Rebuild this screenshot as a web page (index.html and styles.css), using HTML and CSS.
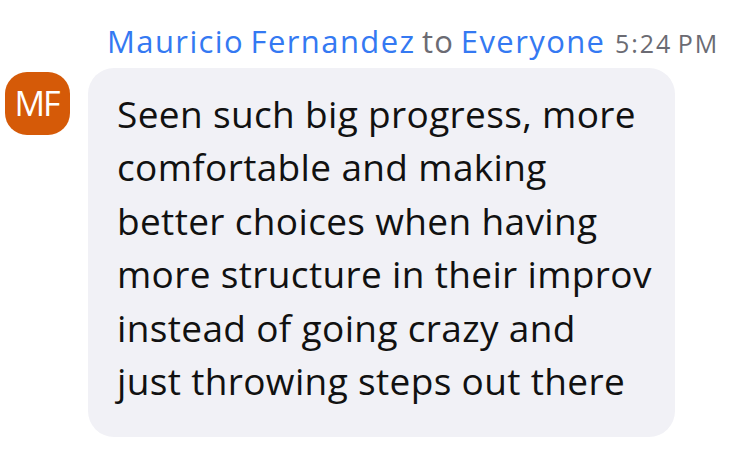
FILE: index.html
```html
<!DOCTYPE html>
<html>
<head>
<meta charset="utf-8">
<link rel="stylesheet" href="styles.css">
</head>
<body>
<div class="msg">
  <div class="meta">
    <span class="name">Mauricio Fernandez</span>
    <span class="to">to</span>
    <span class="name">Everyone</span>
    <span class="time">5:24 PM</span>
  </div>
  <div class="row">
    <div class="avatar">MF</div>
    <div class="bubble">Seen such big progress, more<br>comfortable and making<br>better choices when having<br>more structure in their improv<br>instead of going crazy and<br>just throwing steps out there</div>
  </div>
</div>
</body>
</html>
```
FILE: styles.css
```css
html, body {
  margin: 0;
  padding: 0;
  background: #ffffff;
}
body {
  font-family: "Open Sans", "Noto Sans", sans-serif;
  width: 738px;
  height: 449px;
  overflow: hidden;
}
.msg {
  padding-top: 21px;
}
.meta {
  padding-left: 107px;
  font-size: 31px;
  line-height: 40px;
  height: 40px;
  white-space: nowrap;
  letter-spacing: 1.4px;
  word-spacing: -3px;
}
.name {
  color: #3479f2;
}
.to {
  color: #6b6b73;
}
.time {
  color: #6b6b73;
  font-size: 25px;
  letter-spacing: 2px;
  margin-left: 3px;
}
.row {
  display: flex;
  align-items: flex-start;
  margin-top: 7px;
}
.avatar {
  width: 65px;
  height: 63px;
  margin-left: 5px;
  margin-top: 4px;
  margin-right: 18px;
  border-radius: 22px;
  background: #d55a08;
  color: #ffffff;
  font-size: 34px;
  line-height: 63px;
  text-align: center;
  letter-spacing: -2px;
  text-indent: -2px;
}
.bubble {
  box-sizing: border-box;
  width: 587px;
  padding: 19px 20px 30px 29px;
  background: #f1f1f6;
  border-radius: 26px;
  color: #111111;
  font-size: 37px;
  line-height: 53.4px;
  letter-spacing: 0.35px;
  white-space: nowrap;
}
```
